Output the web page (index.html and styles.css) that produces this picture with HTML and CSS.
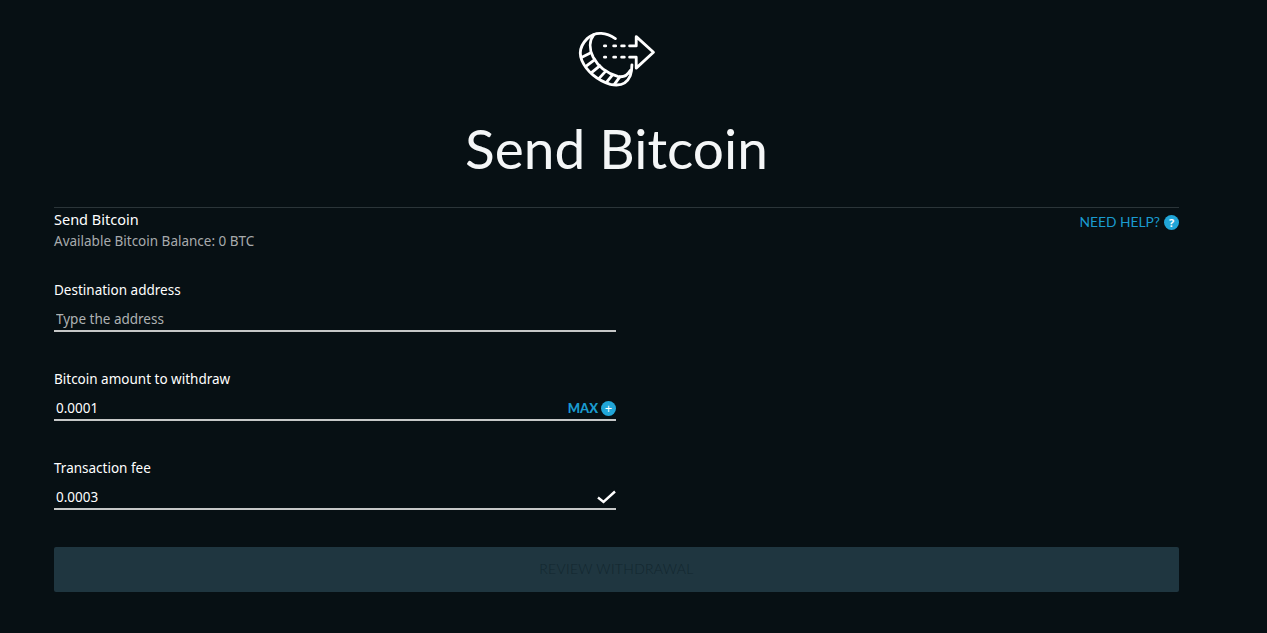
FILE: index.html
```html
<!DOCTYPE html>
<html lang="en">
<head>
<meta charset="utf-8">
<title>Send Bitcoin</title>
<link rel="stylesheet" href="styles.css">
</head>
<body>
<main class="page">
  <header class="hero">
    <svg class="hero-icon" width="80" height="58" viewBox="50 30 240 175" fill="none" stroke="#fff" stroke-width="8.500" stroke-linecap="round" stroke-linejoin="round">
      <path d="M165 56C140 38 105 32 80 56C62 74 54 98 64 122C78 154 110 182 150 194C178 200 200 192 210 168C214 156 215 146 215 135"/>
      <path d="M100 44C86 62 86 88 98 112C114 142 144 162 172 170C190 174 202 166 210 152"/>
      <path d="M64 112L88 100M76 140L102 120M94 158L118 138M116 176L136 154M138 188L156 166M162 194L178 172"/>
      <path d="M132 78h4M160 78h6M184 78h8M208 78h20V50L280 97L228 145V112H208M184 112h8M132 112h4M160 112h6"/>
    </svg>
    <h1 class="title">Send Bitcoin</h1>
  </header>
  <section class="panel">
    <div class="panel-head">
      <div>
        <h2 class="panel-title">Send Bitcoin</h2>
        <p class="balance">Available Bitcoin Balance: 0 BTC</p>
      </div>
      <a class="help" href="#"><span class="help-text">NEED HELP?</span> <span class="dot dot-help">?</span></a>
    </div>
    <form class="form">
      <div class="field">
        <label class="label" for="dest">Destination address</label>
        <div class="input-row">
          <input class="input" id="dest" type="text" placeholder="Type the address">
        </div>
      </div>
      <div class="field">
        <label class="label" for="amount">Bitcoin amount to withdraw</label>
        <div class="input-row">
          <input class="input" id="amount" type="text" value="0.0001">
          <span class="max">MAX <span class="dot dot-plus">+</span></span>
        </div>
      </div>
      <div class="field">
        <label class="label" for="fee">Transaction fee</label>
        <div class="input-row">
          <input class="input" id="fee" type="text" value="0.0003">
          <svg class="check" width="19" height="14" viewBox="0 0 19 14" fill="none" stroke="#fff" stroke-width="2.400"><path d="M1 7.500L6.500 12L18 1.500"/></svg>
        </div>
      </div>
      <button class="submit" type="button" disabled>REVIEW WITHDRAWAL</button>
    </form>
  </section>
</main>
</body>
</html>
```
FILE: styles.css
```css
* { box-sizing: border-box; }
html, body { margin: 0; height: 100%; }
body {
  background: #071014;
  color: #fff;
  font-family: "Noto Sans", "Open Sans", sans-serif;
  overflow: hidden;
}
.page { padding: 0 88px 0 54px; }
.hero {
  display: flex;
  flex-direction: column;
  align-items: center;
  padding-top: 30px;
  height: 207px;
}
.hero-icon { display: block; }
.title {
  margin: 27px 0 0;
  font-family: Lato, sans-serif;
  font-weight: 400;
  font-size: 55px;
  line-height: 66px;
  color: #f4f6f7;
}
.panel { border-top: 1px solid #2b3539; }
.panel-head { display: flex; justify-content: space-between; }
.panel-title {
  margin: 1px 0 0;
  font-size: 14.500px;
  line-height: 20px;
  font-weight: 400;
}
.balance {
  margin: 3px 0 0;
  font-size: 13.500px;
  line-height: 18px;
  color: #a7abad;
}
.help {
  display: flex;
  align-items: center;
  gap: 4px;
  height: 16px;
  margin-top: 6px;
  font-family: Lato, sans-serif;
  font-size: 13.800px;
  color: #1a9bd0;
  text-decoration: none;
}
.help-text { margin-bottom: 2px; }
.dot {
  display: inline-flex;
  align-items: center;
  justify-content: center;
  width: 15px;
  height: 15px;
  border-radius: 50%;
  background: #21a6d8;
  color: #fff;
  font-family: "Open Sans", sans-serif;
  font-weight: 700;
  font-size: 11px;
  line-height: 1;
}
.dot-plus { font-size: 13px; font-weight: 400; }
.form { margin-top: 31px; }
.field { width: 562px; margin-bottom: 38px; }
.field:last-of-type { margin-bottom: 37px; }
.label {
  display: block;
  font-size: 13.500px;
  line-height: 18px;
  color: #fff;
}
.input-row {
  display: flex;
  align-items: center;
  height: 33px;
  border-bottom: 2px solid #c6c8c8;
  padding: 9px 0 0 2px;
}
.input {
  flex: 1;
  min-width: 0;
  border: 0;
  outline: 0;
  padding: 0;
  background: transparent;
  color: #fff;
  font-family: inherit;
  font-size: 13.500px;
}
.input::placeholder { color: #aeb2b3; opacity: 1; }
.max {
  display: flex;
  align-items: center;
  gap: 3px;
  font-family: Lato, sans-serif;
  font-weight: 900;
  font-size: 13px;
  color: #1a9bd0;
}
.submit {
  display: block;
  width: 1125px;
  height: 45px;
  padding: 0 0 2px;
  border: 0;
  border-radius: 2px;
  background: #1f3640;
  color: #12262f;
  font-family: Lato, sans-serif;
  font-weight: 300;
  font-size: 14px;
  letter-spacing: 0.3px;
}
```
